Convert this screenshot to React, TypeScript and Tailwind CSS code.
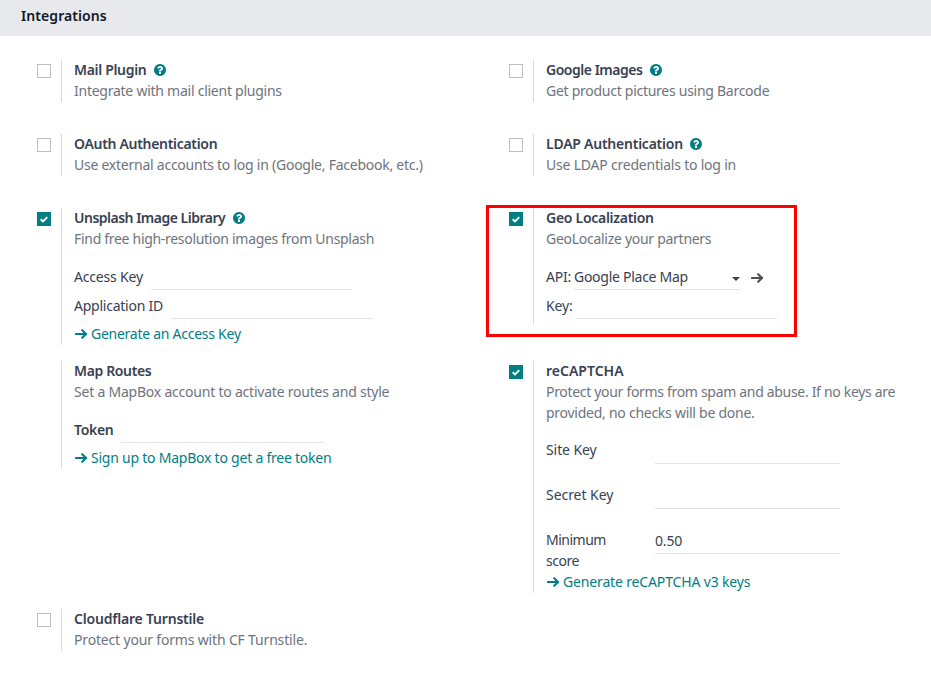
import React from "react";

type TextProps = { children: React.ReactNode; className?: string };

function HelpIcon() {
  return (
    <svg width="12" height="12" viewBox="0 0 1536 1536" className="mt-1 ml-[7.500px] shrink-0 fill-[#017e84]" aria-label="Help">
      <path d="M896 1248v-192q0-14-9-23t-23-9H672q-14 0-23 9t-9 23v192q0 14 9 23t23 9h192q14 0 23-9t9-23zm256-672q0-88-55.500-163T958 297t-170-41q-243 0-371 213-15 24 8 42l132 100q7 6 19 6 16 0 25-12 53-68 86-92 34-24 86-24 48 0 85.500 26t37.500 59q0 38-20 61t-68 45q-63 28-115.500 86.500T640 892v36q0 14 9 23t23 9h192q14 0 23-9t9-23q0-19 21.500-49.500T972 829q32-18 49-28.500t46-35 44.500-48 28-60.500 12.500-81zm384 192q0 209-103 385.500T1153.500 1433 768 1536t-385.500-103T103 1153.500 0 768t103-385.500T382.500 103 768 0t385.500 103T1433 382.500 1536 768z" />
    </svg>
  );
}

function Arrow({ className = "" }: { className?: string }) {
  return (
    <svg width="12" height="10" viewBox="0 0 12 10" fill="none" stroke="currentColor" strokeWidth="2.100" strokeLinecap="round" strokeLinejoin="round" className={`shrink-0 ${className}`}>
      <path d="M1 5H11" />
      <path d="M7.200 1.200L11 5L7.200 8.800" />
    </svg>
  );
}

function Checkbox({ checked }: { checked?: boolean }) {
  return checked ? (
    <span className="mt-1 flex size-3.5 items-center justify-center bg-[#017e84]">
      <svg width="8" height="7" viewBox="0 0 8 7" fill="none" stroke="white" strokeWidth="1.900">
        <path d="M0.700 3.300L3 5.500L7.300 1.200" />
      </svg>
    </span>
  ) : (
    <span className="mt-1 block size-3.5 border border-[#bfbfbf] bg-white" />
  );
}

type SettingProps = {
  title: string;
  tracking: string;
  box?: "on" | "off";
  help?: boolean;
  desc: React.ReactNode;
  children?: React.ReactNode;
};

function Setting({ title, tracking, box, help, desc, children }: SettingProps) {
  return (
    <section className="flex items-start">
      <div className="w-6 shrink-0">{box && <Checkbox checked={box === "on"} />}</div>
      <div className="border-l border-[#d8dadd] pl-3">
        <div className="flex h-[21px]">
          <h3 className={`leading-[19px] font-semibold ${tracking}`}>{title}</h3>
          {help && <HelpIcon />}
        </div>
        <div className="text-[#6d747d]">{desc}</div>
        {children && <div className="mt-4">{children}</div>}
      </div>
    </section>
  );
}

function Line({ children, className = "" }: TextProps) {
  return <div className={`h-[21px] leading-[19px] ${className}`}>{children}</div>;
}

function Field({ label, className, input }: { label: string; className: string; input: string }) {
  return (
    <div className="mb-[5px] flex h-6">
      <label className={`h-[21px] ${className}`}>{label}</label>
      <div className={`border-b border-[#e2e4e7] ${input}`} />
    </div>
  );
}

function Link({ children, className = "" }: TextProps) {
  return (
    <a className={`flex h-[21px] items-center pb-0.5 leading-[19px] text-[#017e84] ${className}`}>
      <Arrow className="mr-[4px] ml-px" />
      {children}
    </a>
  );
}

function CaptchaField({ label, className, value, last }: { label: string; className: string; value?: string; last?: boolean }) {
  return (
    <div className={`flex ${last ? "h-[42px]" : "h-[45px]"}`}>
      <label className={`-mt-px w-[109px] pr-8 ${className}`}>{label}</label>
      <div className="h-6 w-[185px] border-b border-[#e2e4e7] tracking-[-0.190px]">{value}</div>
    </div>
  );
}

export default function App() {
  return (
    <main className="h-[681px] w-[931px] overflow-hidden bg-white font-['Noto_Sans','Open_Sans',sans-serif] text-[14px] leading-[21px] whitespace-nowrap text-[#374151]">
      <header className="h-9 bg-[#e7e9ed] pt-[5px] pl-[21px]">
        <h2 className="font-semibold tracking-[0.080px] text-[#111827]">Integrations</h2>
      </header>

      <div className="pt-6 pl-[37px]">
        <div className="mb-8 grid grid-cols-[472px_1fr] items-start">
          <Setting box="off" help title="Mail Plugin" tracking="tracking-[-0.320px]" desc={<Line className="tracking-[-0.250px]">Integrate with mail client plugins</Line>} />
          <Setting box="off" help title="Google Images" tracking="tracking-[-0.480px]" desc={<Line className="tracking-[-0.270px]">Get product pictures using Barcode</Line>} />
        </div>

        <div className="mb-8 grid grid-cols-[472px_1fr] items-start">
          <Setting box="off" title="OAuth Authentication" tracking="tracking-[-0.310px]" desc={<Line className="tracking-[-0.245px]">Use external accounts to log in (Google, Facebook, etc.)</Line>} />
          <Setting box="off" help title="LDAP Authentication" tracking="tracking-[-0.240px]" desc={<Line className="tracking-[-0.210px]">Use LDAP credentials to log in</Line>} />
        </div>

        <div className="mb-4 grid grid-cols-[472px_1fr] items-start">
          <Setting box="on" help title="Unsplash Image Library" tracking="tracking-[-0.500px]" desc={<Line className="tracking-[-0.300px]">Find free high-resolution images from Unsplash</Line>}>
            <Field label="Access Key" className="w-[77px] tracking-[-0.180px]" input="w-[201px]" />
            <Field label="Application ID" className="w-[97px] tracking-[-0.240px]" input="w-[202px]" />
            <Link className="tracking-[-0.260px]">Generate an Access Key</Link>
          </Setting>
          <div className="relative">
            <Setting box="on" title="Geo Localization" tracking="tracking-[-0.280px]" desc={<Line className="tracking-[-0.280px]">GeoLocalize your partners</Line>}>
              <div className="mb-[5px] flex h-6">
                <label className="w-7 tracking-[-0.230px]">API:</label>
                <div className="flex w-[166px] justify-between border-b border-[#e2e4e7] tracking-[-0.270px]">
                  Google Place Map
                  <svg width="8" height="4" viewBox="0 0 8 4" className="mt-[11px] fill-[#374151]"><path d="M0 0H8L4 4Z" /></svg>
                </div>
                <Arrow className="mt-[7px] ml-[11px] text-[#495057]" />
              </div>
              <Field label="Key:" className="w-[30px] tracking-[-0.100px]" input="w-[201px]" />
            </Setting>
            <div className="absolute -top-[3.500px] -left-[23.500px] h-[132px] w-[311.500px] border-[3px] border-[#fe0000]" />
          </div>
        </div>

        <div className="mb-4 grid grid-cols-[472px_1fr] items-start">
          <Setting title="Map Routes" tracking="tracking-[-0.360px]" desc={<Line className="tracking-[-0.220px]">Set a MapBox account to activate routes and style</Line>}>
            <Field label="Token" className="w-[47px] font-semibold tracking-[-0.320px]" input="w-[202px]" />
            <Link className="tracking-[-0.230px]">Sign up to MapBox to get a free token</Link>
          </Setting>
          <Setting
            box="on"
            title="reCAPTCHA"
            tracking="tracking-[0.010px]"
            desc={
              <>
                <Line className="tracking-[-0.315px]">Protect your forms from spam and abuse. If no keys are</Line>
                <Line className="tracking-[-0.260px]">provided, no checks will be done.</Line>
              </>
            }
          >
            <CaptchaField label="Site Key" className="tracking-[-0.080px]" />
            <CaptchaField label="Secret Key" className="tracking-[-0.050px]" />
            <CaptchaField label="Minimum score" className="whitespace-normal tracking-[-0.500px]" value="0.50" last />
            <Link className="tracking-[-0.150px]">Generate reCAPTCHA v3 keys</Link>
          </Setting>
        </div>

        <Setting box="off" title="Cloudflare Turnstile" tracking="tracking-[-0.200px]" desc={<Line className="tracking-[-0.170px]">Protect your forms with CF Turnstile.</Line>} />
      </div>
    </main>
  );
}
